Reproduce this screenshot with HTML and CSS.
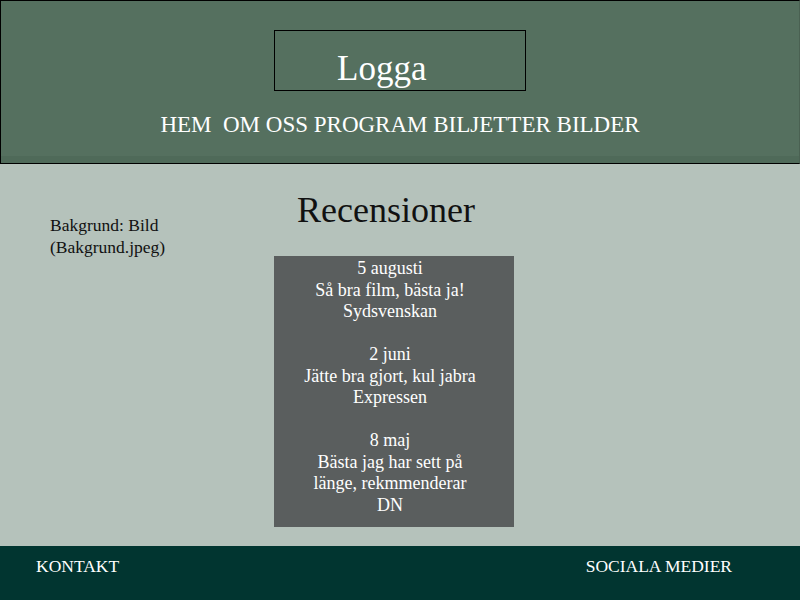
FILE: index.html
```html
<!DOCTYPE html>
<html lang="sv">
<head>
    <meta charset="UTF-8">
    <title>Recensioner</title>
    <link rel="stylesheet" href="styles.css">
</head>
<body>
    <header class="header">
        <div class="logo-box"><span class="logo">Logga</span></div>
        <nav class="nav">HEM&nbsp; OM OSS PROGRAM BILJETTER BILDER</nav>
    </header>

    <main class="main">
        <p class="bg-note">Bakgrund: Bild<br>(Bakgrund.jpeg)</p>
        <section class="reviews">
            <h1>Recensioner</h1>
            <div class="review-box">
                <p>5 augusti<br>Så bra film, bästa ja!<br>Sydsvenskan</p>
                <p>2 juni<br>Jätte bra gjort, kul jabra<br>Expressen</p>
                <p>8 maj<br>Bästa jag har sett på<br>länge, rekmmenderar<br>DN</p>
            </div>
        </section>
    </main>

    <footer class="footer">
        <span>KONTAKT</span>
        <span>SOCIALA MEDIER</span>
    </footer>
</body>
</html>
```

FILE: styles.css
```css
body {
    margin: 0;
    height: 600px;
    display: flex;
    flex-direction: column;
    font-family: 'Liberation Serif', 'Times New Roman', serif;
    background-color: #b5c2bb;
}
.header {
    height: 164px;
    border: 1px solid #000;
    border-right-color: #4a6152;
    background-color: #55705f;
    box-shadow: inset 0 -7px 0 #4f6a59;
    display: flex;
    flex-direction: column;
    align-items: center;
    padding-top: 29px;
    box-sizing: border-box;
}
.logo-box {
    width: 250px;
    height: 59px;
    border: 1px solid #000;
}
.logo {
    display: block;
    margin: 20px 0 0 62px;
    font-size: 35px;
    line-height: 36px;
    color: #fff;
}
.nav {
    margin-top: 21px;
    font-size: 23px;
    color: #fff;
}
.main {
    flex: 1;
    display: flex;
}
.bg-note {
    margin: 50px 0 0 50px;
    width: 224px;
    font-size: 17.5px;
    line-height: 22px;
    color: #111;
}
.reviews {
    width: 240px;
}
.reviews h1 {
    margin: 27px 0 0 0;
    font-weight: normal;
    font-size: 36px;
    line-height: 38px;
    text-align: center;
    color: #111;
    white-space: nowrap;
    position: relative;
    left: -8px;
}
.review-box {
    margin-top: 27px;
    height: 271px;
    padding: 2px 8px 0 0;
    box-sizing: border-box;
    background-color: #5a5e5e;
    color: #fff;
    text-align: center;
    font-size: 18px;
    line-height: 21.5px;
}
.review-box p {
    margin: 0 0 21.5px 0;
}
.footer {
    height: 54px;
    background-color: #013530;
    color: #fff;
    display: flex;
    justify-content: space-between;
    padding: 10px 68px 0 36px;
    box-sizing: border-box;
    font-size: 17.5px;
}
```
